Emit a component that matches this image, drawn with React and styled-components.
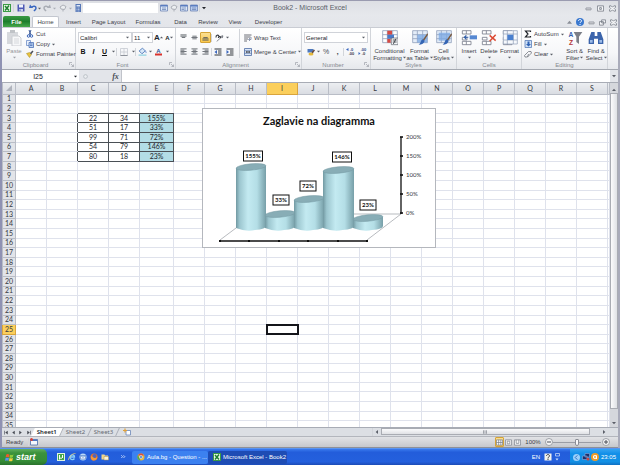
import React from 'react';
import styled, { createGlobalStyle } from 'styled-components';

const GlobalStyle = createGlobalStyle`
  * {
    box-sizing: border-box;
  }

  body {
    margin: 0;
    overflow: hidden;
    font-family: 'Liberation Sans', Arial, sans-serif;
    font-size: 6px;
    color: #3c4048;
  }

  button,
  input,
  select {
    margin: 0;
    padding: 0;
    border: 0;
    border-radius: 0;
    background: none;
    color: inherit;
    font: inherit;
  }
`;

const Screen = styled.div`
  display: flex;
  flex-direction: column;
  height: 100vh;
  background: #245edb;
`;

const Window = styled.div`
  flex: 1;
  min-height: 0;
  display: flex;
  flex-direction: column;
  border-left: 2px solid #8f92b3;
  border-right: 2px solid #a9abba;
  border-top: 1px solid #9a9bb0;
  background: #dfe1e6;
`;

/* Title bar */

const TitleBar = styled.header`
  display: grid;
  grid-template-columns: 1fr auto 1fr;
  align-items: center;
  height: 14px;
  background: linear-gradient(#dddfe4, #e6e8ec);
`;

const QuickAccess = styled.div`
  display: flex;
  align-items: center;
  gap: 1px;
`;

const IconButton = styled.button`
  display: flex;
  flex: none;
  align-items: center;
  justify-content: center;
  width: ${({ $w }) => $w || 9}px;
  height: ${({ $h }) => $h || 10}px;
  color: ${({ $color }) => $color || '#4a4e57'};
  font-size: ${({ $size }) => $size || 6}px;
  ${({ $active }) => $active && `
    border: 1px solid #d5a437;
    border-radius: 1px;
    background: linear-gradient(#fbdf93, #fbc94c);
  `}

  svg {
    display: block;
    flex: none;
  }
`;

const QuickBox = styled.input`
  width: 75px;
  height: 10px;
  background: #fff;
`;

const Title = styled.h1`
  margin: 0;
  font-size: 7px;
  line-height: 10px;
  font-weight: 400;
  color: #5b5f68;
`;

const WindowButtons = styled.div`
  display: flex;
  justify-content: flex-end;
  gap: 2px;
  padding-right: 1px;
`;

/* Ribbon tabs */

const TabBar = styled.nav`
  display: flex;
  align-items: flex-end;
  height: 12px;
  padding-left: 1px;
  background: linear-gradient(#e6e8ec, #e3e5ea);
`;

const FileTab = styled.button`
  width: 27px;
  height: 11px;
  margin-right: 2px;
  border-radius: 2px 2px 0 0;
  background: linear-gradient(#3a9a44, #1d7e2c 50%, #47a84a);
  color: #fff;
  font-weight: 700;
`;

const Tab = styled.button`
  width: ${({ $w }) => $w}px;
  height: 11px;
  border-radius: 2px 2px 0 0;
  line-height: 10px;
  ${({ $active }) => $active && `
    border: 1px solid #c3c7cf;
    border-bottom: 0;
    background: #fff;
  `}
`;

const TabTools = styled.div`
  display: flex;
  align-items: center;
  gap: 1px;
  margin-left: auto;
`;

/* Ribbon */

const Ribbon = styled.section`
  display: flex;
  height: 43px;
  border-top: 1px solid #c9ccd3;
  border-bottom: 1px solid #a4a8b0;
  background: linear-gradient(#ffffff, #f6f7f9 60%, #e6e8ec);
`;

const Group = styled.div`
  flex: none;
  display: flex;
  flex-direction: column;
  width: ${({ $w }) => $w}px;
  border-right: 1px solid #d2d5da;
`;

const GroupBody = styled.div`
  flex: 1;
  display: flex;
  gap: ${({ $gap }) => $gap || 0}px;
  padding: 1px 2px 0;
`;

const GroupLabel = styled.div`
  display: flex;
  align-items: center;
  height: 8px;
  line-height: 8px;
  color: #84888f;

  span {
    flex: 1;
    text-align: center;
  }
`;

const Stack = styled.div`
  display: flex;
  flex-direction: column;
  gap: ${({ $gap }) => $gap || 0}px;
  padding-top: ${({ $top }) => $top || 0}px;
`;

const Line = styled.div`
  display: flex;
  align-items: center;
  height: 11px;
`;

const SmallButton = styled.button`
  display: flex;
  align-items: center;
  gap: 2px;
  height: 10px;
  line-height: 10px;
  white-space: nowrap;
`;

const BigButton = styled.button`
  display: flex;
  flex-direction: column;
  align-items: center;
  flex: none;
  width: ${({ $w }) => $w}px;
  line-height: 6px;
  white-space: nowrap;
  opacity: ${({ $disabled }) => ($disabled ? 0.55 : 1)};

  > svg {
    margin: 1px 0;
  }

  span {
    display: flex;
    align-items: center;
    justify-content: center;
    gap: 1px;
    min-height: 7px;
  }
`;

const Combo = styled.label`
  display: flex;
  align-items: center;
  width: ${({ $w }) => $w}px;
  height: 11px;
  padding: 0 2px 0 1px;
  border: 1px solid #d0d3d9;
  background: #fff;

  select {
    flex: 1;
    min-width: 0;
    appearance: none;
    color: #22252b;
    outline: 0;
  }
`;

const Separator = styled.i`
  flex: none;
  width: 1px;
  height: ${({ $h }) => $h || 8}px;
  background: #d2d5da;
`;

/* Formula bar */

const FormulaBar = styled.div`
  display: flex;
  height: 13px;
  border-bottom: 1px solid #a8acb5;
  background: #e3e5ea;
`;

const NameBox = styled.label`
  display: flex;
  align-items: center;
  width: 77px;
  padding-right: 2px;
  background: #fff;

  input {
    flex: 1;
    min-width: 0;
    text-align: center;
    font-size: 7px;
    color: #22252b;
  }
`;

const FormulaTools = styled.div`
  display: flex;
  align-items: center;
  justify-content: space-between;
  width: 42px;
  padding: 0 1px 0 3px;
  font-family: 'Liberation Serif', serif;
`;

const FormulaInput = styled.input`
  flex: 1;
  min-width: 0;
  border-left: 1px solid #c0c3ca;
  background: #fff;
`;

/* Sheet */

const Workspace = styled.div`
  flex: 1;
  display: flex;
  min-height: 0;
`;

const Canvas = styled.div`
  position: relative;
  flex: 1;
  min-width: 0;
  overflow: hidden;
  background: #fff;
`;

const Grid = styled.table`
  width: 100%;
  height: calc(100% + 4px);
  table-layout: fixed;
  border-collapse: collapse;
  font-family: Lato, 'Open Sans', sans-serif;
  font-size: 7px;
  line-height: 7px;

  th,
  td {
    padding: 0;
    border: 1px solid #dfe2ec;
    text-align: center;
  }

  th {
    border-color: #b9bdc6;
    background: #e2e4e9;
    color: #34373d;
    font-weight: 400;
  }

  thead th {
    height: 11px;
    border-top: 0;
    background: linear-gradient(#eceef1, #d9dce2);
  }
`;

const HeadCell = styled.th`
  && {
    ${({ $active }) => $active && `
      border-color: #d9a43c;
      background: #fbcf5c;
    `}
  }
`;

const FRAME = '#4a4f55';

const Cell = styled.td`
  && {
    color: #22252b;
    ${({ $framed }) => $framed && `border-color: ${FRAME};`}
    ${({ $frameRight }) => $frameRight && `border-right-color: ${FRAME};`}
    ${({ $frameBelow }) => $frameBelow && `border-bottom-color: ${FRAME};`}
    ${({ $tinted }) => $tinted && 'background: #b3dde6;'}
    ${({ $selected }) => $selected && `
      outline: 2px solid #14151a;
      outline-offset: -1px;
    `}
  }
`;

const Chart = styled.figure`
  position: absolute;
  left: 200px;
  top: 25px;
  margin: 0;
  width: 234px;
  height: 140px;
  border: 1px solid #b4b7bd;
  background: #fff;

  svg {
    display: block;
    font-family: Lato, 'Open Sans', sans-serif;
  }
`;

const VerticalBar = styled.div`
  display: flex;
  flex-direction: column;
  align-items: center;
  width: 8px;
  background: #d5d7dc;
`;

const Thumb = styled.div`
  flex: 1;
  align-self: stretch;
  display: flex;
  align-items: center;
  justify-content: center;
  border: 1px solid #a9acb3;
  background: ${({ $vertical }) =>
    `linear-gradient(${$vertical ? '90deg' : '180deg'}, #fbfbfc, #dfe1e5)`};
`;

const Track = styled.div`
  height: ${({ $h }) => $h}px;
`;

/* Sheet tabs and status bar */

const SheetBar = styled.div`
  display: flex;
  align-items: center;
  height: 9px;
  border-top: 1px solid #a8acb5;
  background: #dcdfe4;
`;

const SheetTab = styled.button`
  height: 8px;
  padding: 0 4px;
  border-right: 1px solid #abafb8;
  transform: skewX(-25deg);
  background: ${({ $active }) => ($active ? '#fff' : 'none')};
  color: ${({ $active }) => ($active ? '#22252b' : '#666a72')};
  font-family: 'Noto Sans', 'Open Sans', sans-serif;
  font-weight: ${({ $active }) => ($active ? 600 : 400)};
  line-height: 7px;

  span {
    display: block;
    transform: skewX(25deg);
  }
`;

const HorizontalBar = styled.div`
  display: flex;
  align-items: center;
  width: 40%;
  height: 8px;
  margin-left: auto;

  ${Thumb} {
    height: 7px;
  }
`;

const StatusBar = styled.footer`
  display: flex;
  align-items: center;
  height: 12px;
  padding-left: 4px;
  border-top: 1px solid #b3b6bd;
  border-bottom: 1px solid #8d9099;
  background: linear-gradient(#e2e3e6, #c6c8cc);
`;

const Status = styled.span`
  margin-right: 5px;
`;

const ViewTools = styled.div`
  display: flex;
  align-items: center;
  margin-left: auto;
  padding-right: 8px;
`;

const ZoomValue = styled.span`
  width: 22px;
  text-align: center;
`;

const Slider = styled.input`
  width: 48px;
  height: 8px;
  appearance: none;

  &::-webkit-slider-runnable-track {
    height: 1px;
    background: #9a9da5;
  }

  &::-webkit-slider-thumb {
    appearance: none;
    width: 4px;
    height: 7px;
    margin-top: -3px;
    border: 1px solid #8a8d95;
    border-radius: 1px 1px 2px 2px;
    background: #f8f8f9;
  }
`;

/* Taskbar */

const Taskbar = styled.footer`
  display: flex;
  align-items: center;
  height: 17px;
  border-top: 1px solid #5a94f0;
  background: linear-gradient(#3a7bee, #235ddb 20%, #2460dd 80%, #1c4bb5);
  color: #fff;
`;

const Start = styled.button`
  display: flex;
  align-items: center;
  gap: 2px;
  width: 47px;
  height: 16px;
  padding-left: 5px;
  border-radius: 0 5px 5px 0;
  background: linear-gradient(#61b05f, #3b923c 25%, #358d36 75%, #2a722c);
  color: #fff;
  font-size: 9px;
  font-style: italic;
  font-weight: 700;
  line-height: 14px;
`;

const QuickLaunch = styled.div`
  display: flex;
  gap: 2px;
  width: 85px;
  padding-left: 9px;

  ${IconButton}:last-child {
    margin-left: auto;
    margin-right: 4px;
  }
`;

const Task = styled.button`
  display: flex;
  align-items: center;
  gap: 2px;
  width: ${({ $w }) => $w}px;
  height: 13px;
  padding-left: 5px;
  border-radius: 2px;
  background: ${({ $active }) => ($active ? '#1e4cb4' : '#3c81f0')};
  color: #fff;
  text-align: left;
  white-space: nowrap;
`;

const Language = styled.span`
  margin-left: auto;
  margin-right: 4px;
`;

const Tray = styled.div`
  display: flex;
  align-items: center;
  width: 50px;
  height: 16px;
  margin-left: 9px;
  padding-left: 2px;
  background: linear-gradient(#35a4f2, #128fe8 30%, #1290e4 80%, #0f6fc2);

  time {
    margin-left: 2px;
  }
`;

/* Icons */

const Icon = ({ size = 8, box = 16, children }) => (
  <svg width={size} height={size} viewBox={`0 0 ${box} ${box}`} aria-hidden="true">
    {children}
  </svg>
);

const Arrow = ({ size = 3, color = '#5b5f68', dir = 0 }) => (
  <svg width={size} height={size} viewBox="0 0 6 6" aria-hidden="true">
    <path d="M0 1.5h6L3 5z" fill={color} transform={`rotate(${dir} 3 3)`} />
  </svg>
);

const Launcher = () => (
  <svg width="6" height="6" viewBox="0 0 12 12" fill="none" stroke="#9da1a9" aria-hidden="true">
    <path d="M1 6V1h5M4 4l5 5M9 5v4H5" strokeWidth="1.4" />
  </svg>
);

const ExcelIcon = ({ size = 8 }) => (
  <Icon size={size}>
    <path d="M0 0h16v16H0z" fill="#3b9b45" />
    <path d="M2 2h12v12H2z" fill="#e8f6e6" />
    <path d="M4 4l8 9M12 3L4 13" stroke="#1f8130" strokeWidth="3" />
  </Icon>
);

const SaveIcon = () => (
  <Icon>
    <path d="M1 1h14v14H1z" fill="#4d58b5" />
    <path d="M4 1h8v6H4z" fill="#f1f4fb" />
    <path d="M4 10h8v5H4z" fill="#c9d2e8" />
    <path d="M5 11h2v3H5z" fill="#4d58b5" />
  </Icon>
);

const UndoIcon = ({ color = '#3b68c0', flip }) => (
  <Icon>
    <g transform={flip ? 'translate(16 0) scale(-1 1)' : undefined}>
      <path d="M5 7c3-4 9-3 9 1 0 3-2 4-4 6" fill="none" stroke={color} strokeWidth="3" />
      <path d="M0 8l2-7 6 7z" fill={color} />
    </g>
  </Icon>
);

const ShapesIcon = () => (
  <Icon>
    <path d="M2 6l6-4 6 3-3 6-7-1zM8 11v4" fill="#eceef1" stroke="#9da1a9" strokeWidth="1.6" />
  </Icon>
);

const CalcIcon = () => (
  <Icon>
    <path d="M3 0h11v16H3z" fill="#5677b7" />
    <path d="M5 2h7v3H5z" fill="#dbe6f7" />
    <path d="M5 8h7M5 11h7M5 14h7" stroke="#c5d5ef" strokeWidth="1.5" strokeDasharray="2 1" />
  </Icon>
);

const WindowIcon = ({ kind }) => (
  <Icon size={7}>
    <g fill="#f6f7f9" stroke="#747983" strokeWidth="1.8">
      {kind === 'min' && <rect x="2" y="7" width="12" height="4" rx="1" />}
      {kind === 'max' && <path d="M1 2h14v12H1zM6 6h4v4H6z" />}
      {kind === 'restore' && <path d="M6 2h9v7H6zM1 6h9v8H1z" />}
      {kind === 'close' && <path d="M1 2h4l3 3 3-3h4v3l-3 3 3 3v3h-4l-3-3-3 3H1v-3l3-3-3-3z" />}
    </g>
  </Icon>
);

const HelpIcon = () => (
  <Icon>
    <circle cx="8" cy="8" r="8" fill="#3a78cf" />
    <path d="M5 6c0-4 6-4 6 0 0 2-3 2-3 4M8 12v2" fill="none" stroke="#fff" strokeWidth="2" />
  </Icon>
);

const PasteIcon = () => (
  <Icon size={16}>
    <path d="M1 2h11v12H1z" fill="#b9bdc3" />
    <path d="M4 0h5v3H4z" fill="#8e939b" />
    <path d="M6 6h7l2 2v8H6z" fill="#f5f6f8" stroke="#a5a9b0" />
    <path d="M8 9h5M8 11h5M8 13h5" stroke="#b9bdc3" />
  </Icon>
);

const CutIcon = () => (
  <Icon>
    <path d="M6 0l4 10M10 0L6 10" stroke="#3c5a96" strokeWidth="2" />
    <circle cx="5" cy="12" r="2.5" fill="none" stroke="#3c66b8" strokeWidth="2" />
    <circle cx="11" cy="12" r="2.5" fill="none" stroke="#3c66b8" strokeWidth="2" />
  </Icon>
);

const CopyIcon = () => (
  <Icon>
    <path d="M1 1h8v10H1z" fill="#e9f0fb" stroke="#5b7fc0" strokeWidth="1.4" />
    <path d="M6 5h9v10H6z" fill="#bcd2f2" stroke="#3b62ad" strokeWidth="1.4" />
    <path d="M8 8h5M8 11h5" stroke="#3b62ad" strokeWidth="1.4" />
  </Icon>
);

const BrushIcon = () => (
  <Icon>
    <path d="M1 7l6-2 4 4-4 6z" fill="#e8c33e" stroke="#a28420" />
    <path d="M8 6l5-5 2 2-5 6z" fill="#4a4e57" />
  </Icon>
);

const BorderIcon = () => (
  <Icon>
    <path d="M1 1h14v14H1zM8 1v14M1 8h14" fill="none" stroke="#c3c7cf" strokeWidth="1.5" />
    <path d="M1 15h14" stroke="#8d929b" strokeWidth="2" />
  </Icon>
);

const FillIcon = () => (
  <Icon size={9}>
    <path d="M2 7l6-5 5 5-6 5z" fill="#d9e8f8" stroke="#4774b8" strokeWidth="1.5" />
    <path d="M13 6c3 2 2 5 1 5z" fill="#3a6cc0" />
    <path d="M1 13h14v3H1z" fill="#a9dbe6" />
  </Icon>
);

const LETTER = { fontWeight: 700, textAnchor: 'middle' };

const FontColorIcon = () => (
  <Icon size={9} box={18}>
    <text x="9" y="12" fontSize="12" fill="#2d4f96" {...LETTER}>A</text>
    <path d="M2 13h14v4H2z" fill="#d8322c" />
  </Icon>
);

const AlignIcon = ({ kind }) => {
  const lines = {
    top: 'M1 2h14M1 5h14M4 8h8',
    middle: 'M3 5h10M1 8h14M3 11h10',
    bottom: 'M3 8h10M1 11h14M1 14h14',
    left: 'M1 2h14M1 5h9M1 8h14M1 11h9M1 14h14',
    center: 'M1 2h14M4 5h8M1 8h14M4 11h8M1 14h14',
    right: 'M1 2h14M6 5h9M1 8h14M6 11h9M1 14h14',
  };
  return (
    <Icon size={7}>
      <path d={lines[kind]} stroke="#4d5159" strokeWidth="1.8" />
    </Icon>
  );
};

const IndentIcon = ({ flip }) => (
  <Icon>
    <path d="M1 2h14M8 6h7M8 10h7M1 14h14" stroke="#30343b" strokeWidth="2" />
    <path d={flip ? 'M1 4l5 4-5 4z' : 'M6 4L1 8l5 4z'} fill="#3b68c0" />
  </Icon>
);

const OrientIcon = () => (
  <Icon size={9}>
    <path d="M3 15L14 5M14 5l-4 1M14 5l-1 4" fill="none" stroke="#6a6e77" strokeWidth="1.4" />
    <path d="M2 8c-1-4 4-6 5-2M6 9c0-3 5-4 4 0" fill="none" stroke="#34373d" strokeWidth="2" />
  </Icon>
);

const WrapIcon = () => (
  <Icon>
    <path d="M1 2h14M1 6h12M1 10h7M1 14h5" stroke="#5b5f68" strokeWidth="1.8" />
    <path d="M14 6v5h-4M12 8l-3 3 3 3" fill="none" stroke="#6f7e9c" strokeWidth="1.5" />
    <path d="M1 0v16" stroke="#9da1a9" />
  </Icon>
);

const MergeIcon = () => (
  <Icon>
    <path d="M1 1h14v14H1z" fill="#dce8f8" stroke="#4f6da5" strokeWidth="1.6" />
    <path d="M1 5h14M1 11h14" stroke="#4f6da5" />
    <path d="M6 6L3 8l3 2zM10 6l3 2-3 2z" fill="#20252f" />
    <path d="M6 8h4" stroke="#20252f" strokeWidth="2" />
  </Icon>
);

const FormIcon = ({ fill = '#dce8f8', side }) => (
  <Icon>
    <path d="M1 2h14v12H1z" fill={fill} stroke="#6f86b5" strokeWidth="1.6" />
    <path d="M1 2h14v3H1z" fill="#5a7dc0" />
    <path d={side ? 'M10 5v9M3 8h5M3 11h5' : 'M4 8h8M4 11h8'} stroke="#6f86b5" strokeWidth="1.6" />
  </Icon>
);

const CurrencyIcon = () => (
  <Icon>
    <path d="M1 2h12v7H1z" fill="#4d78bd" />
    <ellipse cx="8" cy="12" rx="5" ry="3" fill="#e5b93a" />
    <path d="M9 8l5-5 2 2-5 6z" fill="#6b4d3e" />
  </Icon>
);

const DecimalIcon = ({ left }) => (
  <Icon size={9} box={18}>
    <text x="11" y="8" fontSize="8" fill="#2c4c86" {...LETTER}>{left ? '.0' : '.00'}</text>
    <text x="11" y="16" fontSize="8" fill="#34373d" {...LETTER}>{left ? '.00' : '.0'}</text>
    <path d={left ? 'M5 2L0 5l5 3z' : 'M1 10l4 3-4 3z'} fill="#3b68c0" />
  </Icon>
);

const TableGrid = ({ fill = '#fff' }) => (
  <path
    d="M1 1h22v18H1zM1 7h22M1 13h22M8 1v18M16 1v18"
    fill={fill}
    stroke="#91a0bb"
    strokeWidth="1.2"
  />
);

const ConditionalIcon = () => (
  <Icon size={16} box={24}>
    <TableGrid />
    <path d="M8 1h7v6H8zM8 13h5v6H8z" fill="#d64a44" />
    <path d="M8 7h10v6H8z" fill="#4979c8" />
    <path d="M14 12h10v10H14z" fill="#f6f8fb" stroke="#5b5f68" />
    <path d="M16 15h6M16 18h6M21 13l-4 8" stroke="#34373d" strokeWidth="1.2" />
  </Icon>
);

const StyleIcon = ({ cell }) => (
  <Icon size={16} box={24}>
    <TableGrid fill="#e4edf9" />
    <path d={cell ? 'M4 4h17v12H4z' : 'M8 7h15v12H8z'} fill="#7eaae4" fillOpacity="0.8" />
    <path d="M23 5l-7 10 2 1 6-9z" fill="#7a593c" />
    <path d="M16 14l3 2c-1 4-4 6-9 6 4-2 2-6 6-8z" fill="#3465b4" />
  </Icon>
);

const CellsIcon = ({ kind }) => (
  <Icon size={16} box={24}>
    <path
      d="M2 1h13v5H2zM8 1v5M2 11h7v4H2zM2 17h13v5H2zM8 17v5"
      fill="#fff"
      stroke="#7d8290"
      strokeWidth="1.3"
    />
    {kind === 'insert' && (
      <>
        <path d="M13 8h11v6H13z" fill="#5688d2" />
        <path d="M11 11H5M8 8l-3 3 3 3" fill="none" stroke="#2c5ba9" strokeWidth="1.6" />
      </>
    )}
    {kind === 'delete' && (
      <path d="M13 8l9 8M22 7l-9 10" stroke="#dc4a33" strokeWidth="2.2" />
    )}
    {kind === 'format' && (
      <>
        <path d="M2 1h21v20H2z" fill="#f6f9fd" stroke="#8d9bb5" />
        <path d="M2 6h21M2 15h21M8 1v20M17 1v20" stroke="#8d9bb5" />
        <path d="M8 7h9v8H8z" fill="#4a80cf" />
      </>
    )}
  </Icon>
);

const SumIcon = () => (
  <Icon>
    <path d="M13 4V2H3l5 6-5 6h10v-2" fill="none" stroke="#22252b" strokeWidth="2.4" />
  </Icon>
);

const FillDownIcon = () => (
  <Icon>
    <path d="M2 1h13v14H2z" fill="#cfe0f6" stroke="#4770b2" strokeWidth="1.4" />
    <path d="M7 3h4v5h3l-5 5-5-5h3z" fill="#2f62b4" />
  </Icon>
);

const EraserIcon = () => (
  <Icon>
    <path d="M1 11l8-8h5l1 3-8 8H2z" fill="#f4f5f8" stroke="#6a6e77" strokeWidth="1.5" />
    <path d="M7 14l2-6" stroke="#6a6e77" strokeWidth="1.5" />
  </Icon>
);

const SortIcon = () => (
  <Icon size={16} box={24}>
    <text x="6" y="11" fontSize="10" fill="#355fae" {...LETTER}>A</text>
    <text x="6" y="22" fontSize="10" fill="#b53636" {...LETTER}>Z</text>
    <path d="M10 3h13l-5 7v11l-4-3v-8z" fill="#7b7f88" />
  </Icon>
);

const FindIcon = () => (
  <Icon size={16} box={24}>
    <path d="M5 3h5v6h4V3h5l4 11v7h-8v-8h-6v8H1v-7z" fill="#3b64ab" />
    <path d="M3 15h4v4H3zM17 15h4v4h-4z" fill="#9cbbe8" />
  </Icon>
);

const ViewIcon = ({ kind }) => (
  <Icon size={7}>
    <path d="M1 2h14v12H1z" fill="#fbfbfb" stroke="#777c86" strokeWidth="1.6" />
    <path
      d={{ normal: 'M6 2v12M11 2v12M1 8h14', layout: 'M5 5h6v6H5z', breaks: 'M5 2v8h6V2' }[kind]}
      fill="none"
      stroke="#777c86"
      strokeWidth="1.6"
    />
  </Icon>
);

const RoundIcon = ({ plus }) => (
  <Icon>
    <circle cx="8" cy="8" r="7" fill="#f6f6f7" stroke="#8d9098" strokeWidth="1.6" />
    <path d={plus ? 'M4 8h8M8 4v8' : 'M4 8h8'} stroke="#4a4e57" strokeWidth="2" />
  </Icon>
);

const MacroIcon = () => (
  <Icon>
    <path d="M1 3h14v11H1z" fill="#f5f8fd" stroke="#4c6cab" strokeWidth="1.6" />
    <path d="M1 3h14v3H1z" fill="#4c78c4" />
    <circle cx="3" cy="3" r="3" fill="#d3433c" />
  </Icon>
);

const CancelIcon = () => (
  <Icon size={5}>
    <circle cx="8" cy="8" r="6" fill="#eceef1" stroke="#a9adb5" strokeWidth="2" />
  </Icon>
);

const NewSheetIcon = () => (
  <Icon>
    <path d="M6 5h9v9H6z" fill="#fff" stroke="#6b86b8" strokeWidth="1.6" />
    <path d="M4 1v8M0 5h8" stroke="#e0a13a" strokeWidth="2.4" />
  </Icon>
);

const NavIcon = ({ dir, end }) => (
  <Icon size={5}>
    <g transform={dir === 'right' ? 'translate(16 0) scale(-1 1)' : undefined} fill="#454952">
      <path d="M12 2L4 8l8 6z" />
      {end && <path d="M1 2h2v12H1z" />}
    </g>
  </Icon>
);

const FlagIcon = () => (
  <Icon size={9}>
    <path d="M2 3c2-2 4-1 6 0L7 8C5 7 3 7 1 8z" fill="#ee5a2b" />
    <path d="M9 3c2 1 4 1 6-1l-1 5c-2 2-4 2-6 1z" fill="#8ecb3d" />
    <path d="M1 9c2-1 4-1 6 0l-1 5c-2-1-4-1-6 0z" fill="#5794ef" />
    <path d="M8 9c2 1 4 1 6 0l-1 5c-2 1-4 1-6 0z" fill="#f8cd3a" />
  </Icon>
);

const UTorrentIcon = () => (
  <Icon>
    <path d="M0 0h16v16H0z" fill="#dff3dd" />
    <path d="M2 2h12v12H2z" fill="#43a54a" />
    <path d="M5 13V4v5c1 2 5 2 6 0V4v6" fill="none" stroke="#fff" strokeWidth="2" />
  </Icon>
);

const ExplorerIcon = () => (
  <Icon>
    <path d="M3 8h10c0-5-8-6-9 0-1 5 6 7 9 3" fill="none" stroke="#8ad0fa" strokeWidth="2.6" />
    <path d="M1 14C0 9 9 0 15 1" fill="none" stroke="#f3d06b" strokeWidth="1.4" />
  </Icon>
);

const MailIcon = () => (
  <Icon>
    <circle cx="8" cy="8" r="7" fill="#b9d9f8" />
    <path d="M3 5h10v7H3zM3 5l5 4 5-4" fill="#eef5fd" stroke="#3b6bbd" />
  </Icon>
);

const FirefoxIcon = () => (
  <Icon>
    <circle cx="8" cy="8" r="7" fill="#e8702a" />
    <circle cx="9" cy="6" r="4" fill="#4a66c2" />
    <path d="M2 6c2 0 3 3 7 4 3 0 4-1 6-3-1 6-4 8-8 8s-6-5-5-9z" fill="#f39b3a" />
  </Icon>
);

const FolderIcon = () => (
  <Icon>
    <path d="M1 3h6l1 2h6v8H1z" fill="#f1d68b" />
    <path d="M6 7h9v7H6z" fill="#fbf3d8" stroke="#a98f4d" />
  </Icon>
);

const ChromeIcon = () => (
  <Icon>
    <circle cx="8" cy="8" r="7" fill="#e8b93c" />
    <path d="M8 1a7 7 0 0 1 6 4H5L2 5a7 7 0 0 1 6-4z" fill="#db4b3f" />
    <path d="M2 4l5 11A7 7 0 0 1 2 4z" fill="#4aa851" />
    <circle cx="8" cy="8" r="3" fill="#4a86e0" stroke="#fff" />
  </Icon>
);

const ChevronIcon = ({ left }) => (
  <Icon size={7}>
    {left && <circle cx="8" cy="8" r="8" fill="#9ad0fa" />}
    <path
      d={left ? 'M10 3L5 8l5 5' : 'M3 3l3 3-3 3M8 3l3 3-3 3'}
      fill="none"
      stroke={left ? '#1c5fb7' : '#d5e4fc'}
      strokeWidth="2"
    />
  </Icon>
);

const NoteIcon = () => (
  <Icon>
    <path d="M1 1h14v14H1z" fill="#f2f2ee" />
    <path d="M5 6c0-4 6-4 6 0 0 2-3 2-3 4M8 11v3" fill="none" stroke="#3a3c42" strokeWidth="2" />
  </Icon>
);

const LanguageMenuIcon = () => (
  <Icon>
    <path d="M5 1h8v5H5z" fill="none" stroke="#d5e4fc" strokeWidth="1.4" />
    <path d="M5 11h6l-3 4z" fill="#d5e4fc" />
  </Icon>
);

const NetworkIcon = () => (
  <Icon>
    <path d="M6 1h9v7H6zM1 6h9v7H1z" fill="#1d2f6b" stroke="#9fb6e4" />
    <circle cx="12" cy="12" r="3" fill="#d2443c" />
  </Icon>
);

const AvastIcon = () => (
  <Icon>
    <circle cx="8" cy="8" r="8" fill="#f09b25" />
    <circle cx="8" cy="8" r="3" fill="none" stroke="#fff" strokeWidth="2.4" />
    <path d="M11 5v7" stroke="#fff" strokeWidth="2" />
  </Icon>
);

/* Data */

const TABS = [
  ['Home', 27], ['Insert', 29], ['Page Layout', 41], ['Formulas', 38],
  ['Data', 27], ['Review', 28], ['View', 26], ['Developer', 41],
];

const COLUMNS = 'ABCDEFGHIJKLMNOPQRS'.split('');
const ROWS = Array.from({ length: 35 }, (_, i) => i + 1);

const VALUES = {
  3: { C: '22', D: '34', E: '155%' },
  4: { C: '51', D: '17', E: '33%' },
  5: { C: '99', D: '71', E: '72%' },
  6: { C: '54', D: '79', E: '146%' },
  7: { C: '80', D: '18', E: '23%' },
};

/* left edge, right edge, top of the cylinder; then the label box */
const CYLINDERS = [
  { label: '155%', x1: 34, x2: 64, top: 59, lx: 51, ly: 48, lw: 19 },
  { label: '33%', x1: 63, x2: 93, top: 106, lx: 79, ly: 92, lw: 16 },
  { label: '72%', x1: 92, x2: 122, top: 91, lx: 106, ly: 78, lw: 16 },
  { label: '146%', x1: 121, x2: 152, top: 62, lx: 140, ly: 49, lw: 19 },
  { label: '23%', x1: 151, x2: 181, top: 110, lx: 166, ly: 97, lw: 16 },
];

const TICKS = ['200%', '150%', '100%', '50%', '0%'];

const DiagramChart = () => (
  <Chart>
    <svg width="232" height="138" viewBox="1 1 232 138" role="img" aria-label="Zaglavie na diagramma">
      <defs>
        <linearGradient id="body">
          <stop offset="0" stopColor="#7299a2" />
          <stop offset="0.12" stopColor="#9cc6cf" />
          <stop offset="0.4" stopColor="#c3eaf1" />
          <stop offset="0.7" stopColor="#b4dee6" />
          <stop offset="1" stopColor="#779fa8" />
        </linearGradient>
      </defs>
      <text x="117" y="17" fontSize="11" fill="#111" {...LETTER}>Zaglavie na diagramma</text>
      <path d="M34 120L18 132M165 132L199 106H150" fill="none" stroke="#9a9da3" strokeWidth="0.7" />
      {CYLINDERS.map(({ label, x1, x2, top, lx, ly, lw }) => {
        const cx = (x1 + x2) / 2;
        return (
          <g key={label}>
            <path
              d={`M${x1} ${top + 1}V120Q${cx - 5} 124 ${cx + 4} 122Q${x2} 121 ${x2} 118V${top - 1}z`}
              fill="url(#body)"
            />
            <ellipse
              cx={cx}
              cy={top}
              rx={(x2 - x1) / 2}
              ry="3.2"
              transform={`rotate(-5 ${cx} ${top})`}
              fill="#88adb6"
              stroke="#7399a3"
              strokeWidth="0.5"
            />
            <rect x={lx - lw / 2} y={ly - 5} width={lw} height="10" fill="#fff" stroke="#111" />
            <text x={lx} y={ly + 2} fontSize="6" fill="#111" {...LETTER}>{label}</text>
          </g>
        );
      })}
      <path d="M18 133H165M199 29V106" stroke="#111" strokeWidth="1.3" />
      {[18, 47, 77, 106, 136, 165].map((x) => (
        <path key={x} d={`M${x} 132v2`} stroke="#111" strokeWidth="2" />
      ))}
      {TICKS.map((tick, i) => (
        <g key={tick}>
          <path d={`M198 ${29 + i * 19}h3`} stroke="#111" strokeWidth="1.6" />
          <text x="204" y={31 + i * 19} fontSize="6" fill="#34373d">{tick}</text>
        </g>
      ))}
    </svg>
  </Chart>
);

const RibbonGroup = ({ label, width, gap, launcher = true, children }) => (
  <Group $w={width}>
    <GroupBody $gap={gap}>{children}</GroupBody>
    <GroupLabel>
      <span>{label}</span>
      {launcher && <Launcher />}
    </GroupLabel>
  </Group>
);

const Big = ({ icon, lines, width, disabled }) => (
  <BigButton $w={width} $disabled={disabled}>
    {icon}
    {lines.map((line, i) => (
      <span key={line}>
        {line}
        {i === lines.length - 1 && <Arrow />}
      </span>
    ))}
  </BigButton>
);

const Tool = ({ label, children, ...rest }) => (
  <IconButton aria-label={label} {...rest}>
    {children}
  </IconButton>
);

const cellValue = (row, column) => VALUES[row] && VALUES[row][column];

const Sheet = () => (
  <Grid>
    <colgroup>
      <col width="13" />
      {COLUMNS.map((c) => <col key={c} width={c === 'E' ? 34 : 31} />)}
      <col />
    </colgroup>
    <thead>
      <tr>
        <th aria-label="Select all">
          <svg width="8" height="7" viewBox="0 0 8 7" aria-hidden="true">
            <path d="M7 1v6H1z" fill="#b0b4bd" />
          </svg>
        </th>
        {COLUMNS.map((c) => <HeadCell key={c} $active={c === 'I'}>{c}</HeadCell>)}
        <th />
      </tr>
    </thead>
    <tbody>
      {ROWS.map((row) => (
        <tr key={row}>
          <HeadCell $active={row === 25}>{row}</HeadCell>
          {COLUMNS.map((c, i) => {
            const value = cellValue(row, c);
            return (
              <Cell
                key={c}
                $framed={value !== undefined}
                $frameRight={cellValue(row, COLUMNS[i + 1]) !== undefined}
                $frameBelow={cellValue(row + 1, c) !== undefined}
                $tinted={value !== undefined && c === 'E'}
                $selected={row === 25 && c === 'I'}
              >
                {value}
              </Cell>
            );
          })}
          <td />
        </tr>
      ))}
    </tbody>
  </Grid>
);

const ExcelRibbon = () => (
  <Ribbon>
    <RibbonGroup label="Clipboard" width={74} gap={2}>
      <Big icon={<PasteIcon />} lines={['Paste', '']} width={20} disabled />
      <Stack>
        <SmallButton><CutIcon />Cut</SmallButton>
        <SmallButton><CopyIcon />Copy <Arrow /></SmallButton>
        <SmallButton><BrushIcon />Format Painter</SmallButton>
      </Stack>
    </RibbonGroup>
    <RibbonGroup label="Font" width={100}>
      <Stack $gap={3} $top={3}>
        <Line>
          <Combo $w={54}>
            <select aria-label="Font"><option>Calibri</option></select>
            <Arrow />
          </Combo>
          <Combo $w={21}>
            <select aria-label="Font size"><option>11</option></select>
            <Arrow />
          </Combo>
          <Tool label="Grow font" $w={11} $size={8} $color="#22252b"><b>A</b><Arrow dir={180} /></Tool>
          <Tool label="Shrink font" $w={10} $color="#22252b"><b>A</b><Arrow /></Tool>
        </Line>
        <Line>
          <Tool label="Bold" $w={10} $size={7} $color="#111"><b>B</b></Tool>
          <Tool label="Italic" $w={11} $size={7} $color="#111"><b><i>I</i></b></Tool>
          <Tool label="Underline" $w={11} $size={7} $color="#111"><b><u>U</u></b></Tool>
          <Tool label="Underline styles" $w={6}><Arrow /></Tool>
          <Separator />
          <Tool label="Borders" $w={14}><BorderIcon /></Tool>
          <Tool label="Border styles" $w={4}><Arrow /></Tool>
          <Separator />
          <Tool label="Fill color" $w={12}><FillIcon /></Tool>
          <Tool label="Fill colors" $w={4}><Arrow /></Tool>
          <Tool label="Font color" $w={13}><FontColorIcon /></Tool>
          <Tool label="Font colors" $w={4}><Arrow /></Tool>
        </Line>
      </Stack>
    </RibbonGroup>
    <RibbonGroup label="Alignment" width={126} gap={4}>
      <Stack $gap={3} $top={3}>
        <Line>
          <Tool label="Top align" $w={11}><AlignIcon kind="top" /></Tool>
          <Tool label="Middle align" $w={11}><AlignIcon kind="middle" /></Tool>
          <Tool label="Bottom align" $w={11} $h={11} $active><AlignIcon kind="bottom" /></Tool>
          <Separator />
          <Tool label="Orientation" $w={14}><OrientIcon /></Tool>
          <Arrow />
        </Line>
        <Line>
          <Tool label="Align left" $w={11}><AlignIcon kind="left" /></Tool>
          <Tool label="Align center" $w={11}><AlignIcon kind="center" /></Tool>
          <Tool label="Align right" $w={11}><AlignIcon kind="right" /></Tool>
          <Separator />
          <Tool label="Decrease indent" $w={12}><IndentIcon /></Tool>
          <Tool label="Increase indent" $w={11}><IndentIcon flip /></Tool>
        </Line>
      </Stack>
      <Separator $h={29} />
      <Stack $gap={3} $top={3}>
        <Line><SmallButton><WrapIcon />Wrap Text</SmallButton></Line>
        <Line><SmallButton><MergeIcon />Merge &amp; Center <Arrow /></SmallButton></Line>
      </Stack>
    </RibbonGroup>
    <RibbonGroup label="Number" width={69}>
      <Stack $gap={3} $top={3}>
        <Line>
          <Combo $w={64}>
            <select aria-label="Number format"><option>General</option></select>
            <Arrow />
          </Combo>
        </Line>
        <Line>
          <Tool label="Accounting format" $w={13}><CurrencyIcon /></Tool>
          <Arrow />
          <Tool label="Percent style" $w={12} $size={7}>%</Tool>
          <Tool label="Comma style" $w={11} $size={8}><b>,</b></Tool>
          <Separator />
          <Tool label="Increase decimal" $w={13}><DecimalIcon left /></Tool>
          <Tool label="Decrease decimal" $w={10}><DecimalIcon /></Tool>
        </Line>
      </Stack>
    </RibbonGroup>
    <RibbonGroup label="Styles" width={86} launcher={false}>
      <Big icon={<ConditionalIcon />} lines={['Conditional', 'Formatting']} width={33} />
      <Big icon={<StyleIcon />} lines={['Format', 'as Table']} width={27} />
      <Big icon={<StyleIcon cell />} lines={['Cell', 'Styles']} width={21} />
    </RibbonGroup>
    <RibbonGroup label="Cells" width={65} launcher={false}>
      <Big icon={<CellsIcon kind="insert" />} lines={['Insert', '']} width={20} />
      <Big icon={<CellsIcon kind="delete" />} lines={['Delete', '']} width={20} />
      <Big icon={<CellsIcon kind="format" />} lines={['Format', '']} width={21} />
    </RibbonGroup>
    <RibbonGroup label="Editing" width={86} gap={1} launcher={false}>
      <Stack>
        <SmallButton><SumIcon />AutoSum <Arrow /></SmallButton>
        <SmallButton><FillDownIcon />Fill <Arrow /></SmallButton>
        <SmallButton><EraserIcon />Clear <Arrow /></SmallButton>
      </Stack>
      <Big icon={<SortIcon />} lines={['Sort &', 'Filter']} width={20} />
      <Big icon={<FindIcon />} lines={['Find &', 'Select']} width={21} />
    </RibbonGroup>
  </Ribbon>
);

const App = () => (
  <Screen>
    <GlobalStyle />
    <Window>
      <TitleBar>
        <QuickAccess>
          <Tool label="Excel" $w={10}><ExcelIcon /></Tool>
          <Separator />
          <Tool label="Save" $w={12}><SaveIcon /></Tool>
          <Tool label="Undo"><UndoIcon /></Tool>
          <Arrow />
          <Tool label="Redo" $w={10}><UndoIcon color="#a9adb5" flip /></Tool>
          <Arrow color="#a9adb5" />
          <Tool label="Shapes" $w={11}><ShapesIcon /></Tool>
          <Arrow color="#a9adb5" />
          <Tool label="Calculator"><CalcIcon /></Tool>
          <QuickBox aria-label="Command" />
          <Tool label="Preview"><FormIcon /></Tool>
          <Tool label="Paste values"><ShapesIcon /></Tool>
          <Tool label="Form"><FormIcon side /></Tool>
          <Tool label="Table"><FormIcon fill="#b9cdf0" /></Tool>
          <Separator />
          <Tool label="Customize" $w={6}><Arrow size={4} color="#22252b" /></Tool>
        </QuickAccess>
        <Title>Book2 - Microsoft Excel</Title>
        <WindowButtons>
          <Tool label="Minimize" $w={10}><WindowIcon kind="min" /></Tool>
          <Tool label="Maximize" $w={10}><WindowIcon kind="max" /></Tool>
          <Tool label="Close" $w={10}><WindowIcon kind="close" /></Tool>
        </WindowButtons>
      </TitleBar>
      <TabBar>
        <FileTab>File</FileTab>
        {TABS.map(([name, width]) => (
          <Tab key={name} $w={width} $active={name === 'Home'}>{name}</Tab>
        ))}
        <TabTools>
          <Tool label="Collapse ribbon"><Arrow size={5} dir={180} color="#8a8e97" /></Tool>
          <Tool label="Help" $w={10}><HelpIcon /></Tool>
          <Tool label="Minimize workbook" $w={10}><WindowIcon kind="min" /></Tool>
          <Tool label="Restore workbook" $w={10}><WindowIcon kind="restore" /></Tool>
          <Tool label="Close workbook" $w={10}><WindowIcon kind="close" /></Tool>
        </TabTools>
      </TabBar>
      <ExcelRibbon />
      <FormulaBar>
        <NameBox>
          <input aria-label="Name box" defaultValue="I25" />
          <Arrow color="#22252b" />
        </NameBox>
        <FormulaTools>
          <Tool label="Cancel" $w={6}><CancelIcon /></Tool>
          <Tool label="Insert function" $size={8}><b><i>fx</i></b></Tool>
        </FormulaTools>
        <FormulaInput aria-label="Formula" />
        <Tool label="Expand formula bar" $w={8} $h={12}><Arrow size={4} /></Tool>
      </FormulaBar>
      <Workspace>
        <Canvas>
          <Sheet />
          <DiagramChart />
        </Canvas>
        <VerticalBar>
          <Track $h={3} />
          <Tool label="Scroll up" $w={8} $h={7}><Arrow size={4} dir={180} /></Tool>
          <Thumb $vertical />
          <Track $h={10} />
          <Tool label="Scroll down" $w={8} $h={8}><Arrow size={4} /></Tool>
        </VerticalBar>
      </Workspace>
      <SheetBar>
        <Tool label="First sheet" $w={8} $h={8}><NavIcon dir="left" end /></Tool>
        <Tool label="Previous sheet" $w={7} $h={8}><NavIcon dir="left" /></Tool>
        <Tool label="Next sheet" $w={7} $h={8}><NavIcon dir="right" /></Tool>
        <Tool label="Last sheet" $w={9} $h={8}><NavIcon dir="right" end /></Tool>
        <SheetTab $active><span>Sheet1</span></SheetTab>
        <SheetTab><span>Sheet2</span></SheetTab>
        <SheetTab><span>Sheet3</span></SheetTab>
        <Tool label="Insert sheet" $w={16} $h={8}><NewSheetIcon /></Tool>
        <HorizontalBar>
          <Separator />
          <Tool label="Scroll left" $w={8} $h={8}><Arrow size={4} dir={90} /></Tool>
          <Thumb>
            <Icon size={4}><path d="M2 1v14M8 1v14M14 1v14" stroke="#777b83" strokeWidth="2.5" /></Icon>
          </Thumb>
          <Tool label="Scroll right" $w={28} $h={8}><Arrow size={4} dir={-90} /></Tool>
        </HorizontalBar>
      </SheetBar>
      <StatusBar>
        <Status>Ready</Status>
        <Separator />
        <Tool label="Record macro"><MacroIcon /></Tool>
        <ViewTools>
          <Tool label="Normal view" $active><ViewIcon kind="normal" /></Tool>
          <Tool label="Page layout view"><ViewIcon kind="layout" /></Tool>
          <Tool label="Page break preview"><ViewIcon kind="breaks" /></Tool>
          <ZoomValue>100%</ZoomValue>
          <Tool label="Zoom out"><RoundIcon /></Tool>
          <Slider type="range" aria-label="Zoom" defaultValue={50} />
          <Tool label="Zoom in"><RoundIcon plus /></Tool>
        </ViewTools>
      </StatusBar>
    </Window>
    <Taskbar>
      <Start><FlagIcon />start</Start>
      <QuickLaunch>
        <Tool label="uTorrent"><UTorrentIcon /></Tool>
        <Tool label="Internet Explorer"><ExplorerIcon /></Tool>
        <Tool label="Outlook Express"><MailIcon /></Tool>
        <Tool label="Firefox"><FirefoxIcon /></Tool>
        <Tool label="Folders"><FolderIcon /></Tool>
        <Tool label="More"><ChevronIcon /></Tool>
      </QuickLaunch>
      <Task $w={76}><ChromeIcon />Aula.bg - Question - ...</Task>
      <Task $w={79} $active><ExcelIcon />Microsoft Excel - Book2</Task>
      <Language>EN</Language>
      <NoteIcon />
      <Tool label="Language bar options"><LanguageMenuIcon /></Tool>
      <Tray>
        <Tool label="Show hidden icons"><ChevronIcon left /></Tool>
        <Tool label="Network"><NetworkIcon /></Tool>
        <Tool label="Antivirus"><AvastIcon /></Tool>
        <time>23:05</time>
      </Tray>
    </Taskbar>
  </Screen>
);

export default App;
